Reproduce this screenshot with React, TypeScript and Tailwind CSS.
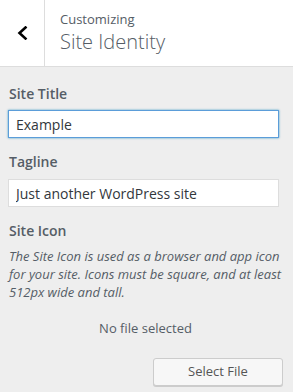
const font = { fontFamily: '"Open Sans", "Noto Sans", sans-serif' };

function BackChevron() {
  return (
    <svg width="12" height="14" viewBox="0 0 12 14" fill="none">
      <path d="M9.5 1.5 L3.5 7 L9.5 12.5" stroke="#000" strokeWidth="2.6" strokeLinecap="square" />
    </svg>
  );
}

export default function App() {
  return (
    <div className="flex h-[392px] w-[293px] flex-col overflow-hidden bg-[#eeeeee] text-[#555d66]" style={font}>
      <div className="flex h-[67px] shrink-0 border-b border-[#dddddd] bg-white">
        <button className="flex w-[45px] items-center justify-center border-r border-[#dddddd] pb-[1px]">
          <BackChevron />
        </button>
        <div className="pl-[15px] pt-[10px]">
          <div className="text-[13px] leading-[18px]">Customizing</div>
          <div className="mt-[1px] text-[20px] font-light leading-[26px]">Site Identity</div>
        </div>
      </div>

      <div className="flex flex-col pl-[8px] pr-[10px] pt-[17px]">
        <label className="pl-[1px] text-[14px] font-semibold leading-[20px]">Site Title</label>
        <input
          readOnly
          value="Example"
          className="mt-[6px] mr-[4px] h-[28px] border border-[#5b9dd9] bg-white px-[7px] text-[14px] text-[#32373c] shadow-[0_0_2px_rgba(30,140,190,0.8)] outline-none"
          style={font}
        />

        <label className="mt-[14px] pl-[1px] text-[14px] font-semibold leading-[20px]">Tagline</label>
        <input
          readOnly
          value="Just another WordPress site"
          className="mt-[7px] mr-[4px] h-[28px] border border-[#dddddd] bg-white px-[7px] text-[14px] text-[#32373c] outline-none"
          style={font}
        />

        <div className="mt-[14px] pl-[1px] text-[14px] font-semibold leading-[20px]">Site Icon</div>
        <p className="mt-[6px] pl-[1px] text-[13px] italic leading-[18px]">
          The Site Icon is used as a browser and app icon for your site. Icons must be square, and at least 512px wide and tall.
        </p>

        <div className="mt-[18px] text-center text-[13px] leading-[18px]">No file selected</div>

        <button
          className="mt-[21px] h-[28px] w-[130px] self-end rounded-[3px] border border-[#cccccc] bg-[#f7f7f7] text-[13px] text-[#555555] shadow-[0_1px_0_#cccccc]"
          style={font}
        >
          Select File
        </button>
      </div>
    </div>
  );
}
